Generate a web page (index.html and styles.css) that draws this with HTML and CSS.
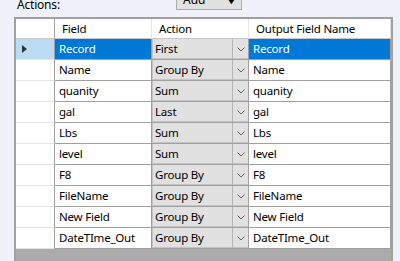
FILE: index.html
```html
<!DOCTYPE html>
<html lang="en">
<head>
  <meta charset="UTF-8" />
  <title>Summarize - Actions</title>
  <link rel="stylesheet" href="styles.css">
</head>
<body>

<div class="toolbar">
  <span class="label">Actions:</span>
  <button class="add-btn">Add <span class="caret">&#9660;</span></button>
</div>

<div class="grid">
  <div class="row head">
    <div class="rh"></div>
    <div class="cell">Field</div>
    <div class="cell">Action</div>
    <div class="cell">Output Field Name</div>
  </div>

  <div class="row selected">
    <div class="rh"><span class="arrow"></span></div>
    <div class="cell field">Record</div>
    <div class="cell action"><span class="val">First</span><span class="drop"><svg width="8" height="5" viewBox="0 0 8 5"><polyline points="0.5,0.5 4,4 7.5,0.5" fill="none" stroke="#666" stroke-width="1"/></svg></span></div>
    <div class="cell out">Record</div>
  </div>

  <div class="row">
    <div class="rh"></div>
    <div class="cell field">Name</div>
    <div class="cell action"><span class="val">Group By</span><span class="drop"><svg width="8" height="5" viewBox="0 0 8 5"><polyline points="0.5,0.5 4,4 7.5,0.5" fill="none" stroke="#666" stroke-width="1"/></svg></span></div>
    <div class="cell out">Name</div>
  </div>

  <div class="row">
    <div class="rh"></div>
    <div class="cell field">quanity</div>
    <div class="cell action"><span class="val">Sum</span><span class="drop"><svg width="8" height="5" viewBox="0 0 8 5"><polyline points="0.5,0.5 4,4 7.5,0.5" fill="none" stroke="#666" stroke-width="1"/></svg></span></div>
    <div class="cell out">quanity</div>
  </div>

  <div class="row">
    <div class="rh"></div>
    <div class="cell field">gal</div>
    <div class="cell action"><span class="val">Last</span><span class="drop"><svg width="8" height="5" viewBox="0 0 8 5"><polyline points="0.5,0.5 4,4 7.5,0.5" fill="none" stroke="#666" stroke-width="1"/></svg></span></div>
    <div class="cell out">gal</div>
  </div>

  <div class="row">
    <div class="rh"></div>
    <div class="cell field">Lbs</div>
    <div class="cell action"><span class="val">Sum</span><span class="drop"><svg width="8" height="5" viewBox="0 0 8 5"><polyline points="0.5,0.5 4,4 7.5,0.5" fill="none" stroke="#666" stroke-width="1"/></svg></span></div>
    <div class="cell out">Lbs</div>
  </div>

  <div class="row">
    <div class="rh"></div>
    <div class="cell field">level</div>
    <div class="cell action"><span class="val">Sum</span><span class="drop"><svg width="8" height="5" viewBox="0 0 8 5"><polyline points="0.5,0.5 4,4 7.5,0.5" fill="none" stroke="#666" stroke-width="1"/></svg></span></div>
    <div class="cell out">level</div>
  </div>

  <div class="row">
    <div class="rh"></div>
    <div class="cell field">F8</div>
    <div class="cell action"><span class="val">Group By</span><span class="drop"><svg width="8" height="5" viewBox="0 0 8 5"><polyline points="0.5,0.5 4,4 7.5,0.5" fill="none" stroke="#666" stroke-width="1"/></svg></span></div>
    <div class="cell out">F8</div>
  </div>

  <div class="row">
    <div class="rh"></div>
    <div class="cell field">FileName</div>
    <div class="cell action"><span class="val">Group By</span><span class="drop"><svg width="8" height="5" viewBox="0 0 8 5"><polyline points="0.5,0.5 4,4 7.5,0.5" fill="none" stroke="#666" stroke-width="1"/></svg></span></div>
    <div class="cell out">FileName</div>
  </div>

  <div class="row">
    <div class="rh"></div>
    <div class="cell field">New Field</div>
    <div class="cell action"><span class="val">Group By</span><span class="drop"><svg width="8" height="5" viewBox="0 0 8 5"><polyline points="0.5,0.5 4,4 7.5,0.5" fill="none" stroke="#666" stroke-width="1"/></svg></span></div>
    <div class="cell out">New Field</div>
  </div>

  <div class="row">
    <div class="rh"></div>
    <div class="cell field">DateTIme_Out</div>
    <div class="cell action"><span class="val">Group By</span><span class="drop"><svg width="8" height="5" viewBox="0 0 8 5"><polyline points="0.5,0.5 4,4 7.5,0.5" fill="none" stroke="#666" stroke-width="1"/></svg></span></div>
    <div class="cell out">DateTIme_Out</div>
  </div>
</div>

</body>
</html>
```

FILE: styles.css
```css
* {
  margin: 0; padding: 0; box-sizing: border-box;
  font-family: 'Noto Sans', 'Open Sans', sans-serif;
}

body {
  background: #eef0fa;
  color: #000;
  font-size: 11.5px;
  letter-spacing: -0.2px;
  overflow: hidden;
}

.toolbar {
  display: grid;
  grid-template-columns: 176px 66px;
  height: 17px;
}

.label {
  padding-left: 17px;
  font-size: 12px;
  line-height: 12px;
  margin-top: -1px;
}

.add-btn {
  height: 22px;
  margin-top: -12px;
  background: #e1e1e1;
  border: 1px solid #adadad;
  font-size: 12px;
  text-align: left;
  padding-left: 6px;
  display: flex;
  align-items: center;
}

.add-btn .caret {
  margin-left: auto;
  margin-right: 4px;
  font-size: 11px;
  transform: scaleX(1.3);
}

.grid {
  margin-left: 14px;
  width: 379px;
  height: 300px;
  border: 2px solid #a0a0a0;
  border-bottom: none;
  background: #ababab;
}

.row {
  display: grid;
  grid-template-columns: 39px 97px 97px 142px;
  height: 21px;
}

.row.head {
  height: 20px;
}

.rh {
  background: #fff;
  border-right: 1px solid #a0a0a0;
  border-bottom: 1px solid #e4e4e4;
  display: flex;
  align-items: center;
  padding-left: 6px;
}

.cell {
  background: #fff;
  border-right: 1px solid #a0a0a0;
  border-bottom: 1px solid #a0a0a0;
  padding-left: 4px;
  line-height: 20px;
  white-space: nowrap;
  overflow: hidden;
}

.head .cell {
  padding-left: 7px;
  line-height: 19px;
  border-right-color: #e4e4e4;
  border-bottom-color: #c8c8c8;
}

.head .rh {
  border-bottom-color: #c8c8c8;
}

.cell.action {
  background: #e1e1e1;
  padding-left: 0;
  display: flex;
  box-shadow: inset 1px 0 0 #c4c4c4, inset 0 -1px 0 #c4c4c4;
}

.action .val {
  flex: 1;
  padding-left: 3px;
}

.action .drop {
  width: 16px;
  border-left: 1px solid #b4b4b4;
  display: flex;
  align-items: center;
  justify-content: center;
}

.selected .rh {
  background: #bcdcf4;
}

.selected .field, .selected .out {
  background: #0078d7;
  color: #fff;
}

.arrow {
  width: 0; height: 0;
  border-top: 4px solid transparent;
  border-bottom: 4px solid transparent;
  border-left: 5px solid #333;
}
```
